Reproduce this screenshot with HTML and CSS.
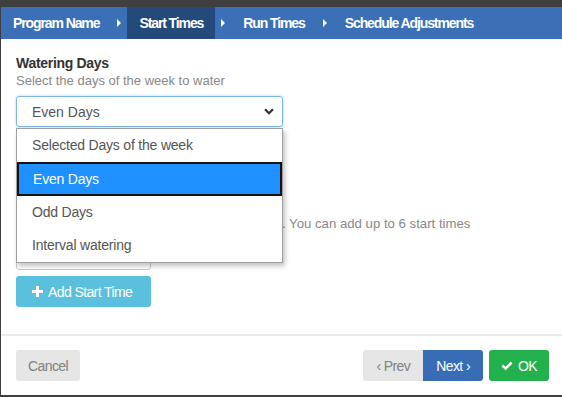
FILE: index.html
```html
<!DOCTYPE html>
<html lang="en">
<head>
    <meta charset="UTF-8">
    <meta name="viewport" content="width=device-width, initial-scale=1.0">
    <title>Program Wizard - Start Times</title>
    <link rel="stylesheet" href="styles.css">
</head>
<body>
    <div class="modal">
        <div class="steps">
            <span class="step">Program Name</span>
            <span class="step-arrow"></span>
            <span class="step active">Start Times</span>
            <span class="step-arrow"></span>
            <span class="step">Run Times</span>
            <span class="step-arrow"></span>
            <span class="step">Schedule Adjustments</span>
        </div>

        <div class="modal-body">
            <div class="field-title">Watering Days</div>
            <div class="field-help">Select the days of the week to water</div>

            <div class="select-wrap">
                <div class="select">
                    <span>Even Days</span>
                    <svg class="chevron" width="10" height="7" viewBox="0 0 10 7">
                        <polyline points="1,1.2 5,5.2 9,1.2" fill="none" stroke="#333" stroke-width="2.2"/>
                    </svg>
                </div>
                <!-- open dropdown covers the start of the next section -->
                <ul class="options">
                    <li>Selected Days of the week</li>
                    <li class="selected">Even Days</li>
                    <li>Odd Days</li>
                    <li>Interval watering</li>
                </ul>
            </div>

            <div class="start-times">
                <div class="field-help help-tail">. You can add up to 6 start times</div>
                <div class="time-input"></div>
                <button class="btn btn-info">
                    <svg width="11" height="11" viewBox="0 0 11 11">
                        <path d="M4 0h3v4h4v3H7v4H4V7H0V4h4z" fill="#fff"/>
                    </svg>
                    Add Start Time
                </button>
            </div>
        </div>

        <div class="modal-footer">
            <button class="btn btn-light">Cancel</button>
            <div class="footer-right">
                <div class="btn-group">
                    <button class="btn btn-light">&lsaquo; Prev</button>
                    <button class="btn btn-primary">Next &rsaquo;</button>
                </div>
                <button class="btn btn-success">
                    <svg width="12" height="10" viewBox="0 0 12 10">
                        <path d="M0.5 5.2 2.3 3.4 4.6 5.7 9.7 0.6 11.5 2.4 4.6 9.3z" fill="#fff"/>
                    </svg>
                    OK
                </button>
            </div>
        </div>
    </div>
</body>
</html>
```

FILE: styles.css
```css
* {
    margin: 0;
    padding: 0;
    box-sizing: border-box;
}

body {
    font-family: 'Liberation Sans', Arial, sans-serif;
    background: #3f3f3f;
    height: 397px;
    overflow: hidden;
}

.modal {
    margin: 7px 0 0 1px;
    height: 388px;
    background: white;
    display: flex;
    flex-direction: column;
}

.steps {
    height: 32px;
    background: #3b6fb6;
    display: flex;
    align-items: stretch;
    flex-shrink: 0;
}

.step {
    display: flex;
    align-items: center;
    padding: 0 12px;
    color: white;
    font-weight: bold;
    font-size: 14px;
    letter-spacing: -1.1px;
}

.step.active {
    background: #244a7c;
}

.step-arrow {
    width: 16px;
    display: flex;
    align-items: center;
    justify-content: center;
}

.step-arrow::after {
    content: '';
    border-left: 4px solid white;
    border-top: 4px solid transparent;
    border-bottom: 4px solid transparent;
}

.modal-body {
    flex: 1;
    padding: 15px 16px 0 15px;
}

.field-title {
    font-size: 14px;
    font-weight: bold;
    color: #333;
    line-height: 18px;
    letter-spacing: -0.3px;
}

.field-help {
    font-size: 13px;
    color: #888;
    line-height: 18px;
}

.select-wrap {
    position: relative;
    width: 267px;
    margin-top: 6px;
}

.select {
    height: 31px;
    border: 1px solid #7db5e6;
    border-radius: 3px;
    box-shadow: 0 0 3px rgba(102, 175, 233, 0.5);
    display: flex;
    align-items: center;
    justify-content: space-between;
    padding: 0 8px 0 15px;
    font-size: 14px;
    color: #555;
}

.options {
    position: absolute;
    top: 32px;
    left: 0;
    width: 267px;
    list-style: none;
    background: white;
    border: 1px solid #a0a0a0;
    box-shadow: 2px 3px 5px rgba(0, 0, 0, 0.25);
    z-index: 2;
}

.options li {
    height: 33px;
    line-height: 33px;
    padding-left: 15px;
    font-size: 14px;
    letter-spacing: -0.2px;
    color: #555;
}

.options li.selected {
    height: 34px;
    line-height: 30px;
    padding-left: 14px;
    background: #1e90ff;
    border: 2px solid #111;
    color: white;
}

.start-times {
    margin-top: 88px;
}

.help-tail {
    padding-left: 266px;
    font-size: 13.2px;
}

.time-input {
    width: 135px;
    height: 31px;
    margin-top: 6px;
    border: 1px solid #ccc;
    border-radius: 3px;
}

.btn {
    font-family: inherit;
    font-size: 14px;
    letter-spacing: -0.6px;
    height: 31px;
    padding: 0 12px;
    border: none;
    border-radius: 3px;
    display: inline-flex;
    align-items: center;
    gap: 5px;
    cursor: pointer;
}

.btn-info {
    margin-top: 6px;
    width: 135px;
    padding-left: 16px;
    background: #5bc0de;
    color: white;
}

.modal-footer {
    border-top: 2px solid #ebebeb;
    padding: 14px 13px 14px 15px;
    display: flex;
    justify-content: space-between;
    flex-shrink: 0;
}

.footer-right {
    display: flex;
    gap: 6px;
}

.btn-group {
    display: flex;
}

.btn-group .btn {
    padding: 0 13px;
}

.btn-group .btn:first-child {
    border-radius: 3px 0 0 3px;
}

.btn-group .btn:last-child {
    border-radius: 0 3px 3px 0;
}

.btn-light {
    background: #e6e6e6;
    color: #808080;
}

.btn-primary {
    background: #386db5;
    color: white;
}

.btn-success {
    background: #23b14d;
    color: white;
}
```
